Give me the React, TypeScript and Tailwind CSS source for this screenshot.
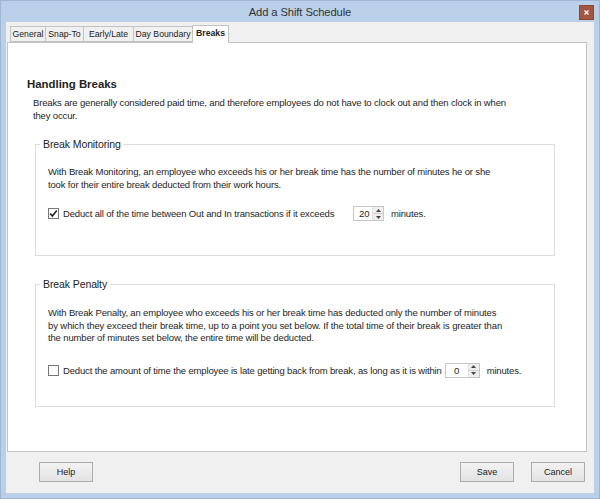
import React from "react";

const font = { fontFamily: '"Liberation Sans", Arial, sans-serif' };

function Tab({ label, width, active }: { label: string; width: string; active?: boolean }) {
  if (active) {
    return (
      <div className={`${width} h-[18px] -mb-px -ml-px bg-white border border-b-0 border-[#c3c3c3] text-[8.7px] font-bold leading-[15px] text-[#222] text-center z-10`}>
        {label}
      </div>
    );
  }
  return (
    <div className={`${width} h-[16px] bg-[#f0f0f0] border border-[#c3c3c3] -ml-px first:ml-0 text-[8.7px] leading-[15px] text-[#222] text-center`}>
      {label}
    </div>
  );
}

function Spinner({ value, width, center }: { value: string; width: string; center?: boolean }) {
  return (
    <div className={`flex h-[15px] ${width} border border-[#c6c6c6] bg-white shrink-0`}>
      <div className={`flex-1 leading-[13px] ${center ? "text-center" : "pl-[5px]"}`}>{value}</div>
      <div className="w-[11px] flex flex-col border-l border-[#e0e0e0] bg-[#eeeeee]">
        <div className="flex-1 flex items-center justify-center">
          <svg width="5" height="3" viewBox="0 0 5 3"><path d="M0 3 L2.5 0 L5 3 Z" fill="#444" /></svg>
        </div>
        <div className="h-px bg-[#d0d0d0]" />
        <div className="flex-1 flex items-center justify-center">
          <svg width="5" height="3" viewBox="0 0 5 3"><path d="M0 0 L2.5 3 L5 0 Z" fill="#444" /></svg>
        </div>
      </div>
    </div>
  );
}

function Checkbox({ checked }: { checked?: boolean }) {
  return (
    <div className="w-[11px] h-[11px] border border-[#777] bg-white flex items-center justify-center shrink-0">
      {checked && (
        <svg width="9" height="9" viewBox="0 0 9 9">
          <path d="M1.2 4.6 L3.4 7 L7.8 1.6" stroke="#222" strokeWidth="1.6" fill="none" />
        </svg>
      )}
    </div>
  );
}

function Button({ label }: { label: string }) {
  return (
    <button className="w-[54px] h-[20px] border border-[#adadad] bg-gradient-to-b from-[#f2f2f2] to-[#e3e3e3] text-[9px] text-[#222] leading-none">
      {label}
    </button>
  );
}

const body = "text-[9.5px] tracking-[-0.15px] leading-[13px]";
const legend = "ml-[4px] px-[3px] text-[10.5px] tracking-[-0.1px] leading-[14px] text-[#222]";

export default function App() {
  return (
    <div
      className="w-[600px] h-[499px] bg-[#b9d0e8] border border-[#9cb6d3] flex flex-col text-[#1e1e1e]"
      style={font}
    >
      <div className="h-[21px] grid grid-cols-[1fr_auto_1fr] items-center">
        <div />
        <div className="text-[11.2px] tracking-[-0.1px] text-[#333] pt-px">Add a Shift Schedule</div>
        <div className="flex justify-end pr-[5px]">
          <div className="w-[15px] h-[15px] bg-[#a2563f] border border-[#8c4733] flex items-center justify-center mt-px">
            <svg width="5" height="5" viewBox="0 0 5 5">
              <path d="M0.5 0.5 L4.5 4.5 M4.5 0.5 L0.5 4.5" stroke="#fff" strokeWidth="1.3" />
            </svg>
          </div>
        </div>
      </div>

      <div className="flex-1 mx-[5px] mb-[5px] bg-[#f0f0f0] flex flex-col">
        <div className="flex items-end ml-[4px] mt-[3px]">
          <Tab label="General" width="w-[36px]" />
          <Tab label="Snap-To" width="w-[39px]" />
          <Tab label="Early/Late" width="w-[51px]" />
          <Tab label="Day Boundary" width="w-[60px]" />
          <Tab label="Breaks" width="w-[37px]" active />
        </div>

        <div className="h-[410px] ml-px mr-[7px] bg-white border border-[#c3c3c3] flex flex-col">
          <div className="ml-[19px] mt-[33px] text-[11.4px] font-bold leading-[16px] text-[#222]">Handling Breaks</div>
          <p className={`ml-[25px] mt-[4px] whitespace-nowrap ${body}`}>
            Breaks are generally considered paid time, and therefore employees do not have to clock out and then clock in when
            <br />
            they occur.
          </p>

          <fieldset className="ml-[27px] w-[520px] mt-[15px] border border-[#dcdcdc]">
            <legend className={legend}>Break Monitoring</legend>
            <div className={`pl-[12px] pb-[34px] ${body}`}>
              <p className="mt-[14px] whitespace-nowrap">
                With Break Monitoring, an employee who exceeds his or her break time has the number of minutes he or she
                <br />
                took for their entire break deducted from their work hours.
              </p>
              <div className="flex items-center mt-[15px] h-[15px]">
                <Checkbox checked />
                <span className="ml-[4px] w-[290px] whitespace-nowrap">Deduct all of the time between Out and In transactions if it exceeds</span>
                <Spinner value="20" width="w-[31px]" />
                <span className="ml-[7px]">minutes.</span>
              </div>
            </div>
          </fieldset>

          <fieldset className="ml-[27px] w-[520px] mt-[21px] border border-[#dcdcdc]">
            <legend className={legend}>Break Penalty</legend>
            <div className={`pl-[12px] pb-[28px] ${body}`}>
              <p className="mt-[16px] whitespace-nowrap leading-[12.5px]">
                With Break Penalty, an employee who exceeds his or her break time has deducted only the number of minutes
                <br />
                <span className="tracking-[-0.1px]">by which they exceed their break time, up to a point you set below. If the total time of their break is greater than</span>
                <br />
                the number of minutes set below, the entire time will be deducted.
              </p>
              <div className="flex items-center mt-[18px] h-[15px]">
                <Checkbox />
                <span className="ml-[4px] whitespace-nowrap">Deduct the amount of time the employee is late getting back from break, as long as it is within</span>
                <Spinner value="0" width="w-[35px] ml-[3px]" center />
                <span className="ml-[7px]">minutes.</span>
              </div>
            </div>
          </fieldset>
        </div>

        <div className="flex-1 flex items-center px-[33px] pr-[9px] pb-[1px]">
          <Button label="Help" />
          <div className="flex-1" />
          <Button label="Save" />
          <div className="w-[17px]" />
          <Button label="Cancel" />
        </div>
      </div>
    </div>
  );
}
